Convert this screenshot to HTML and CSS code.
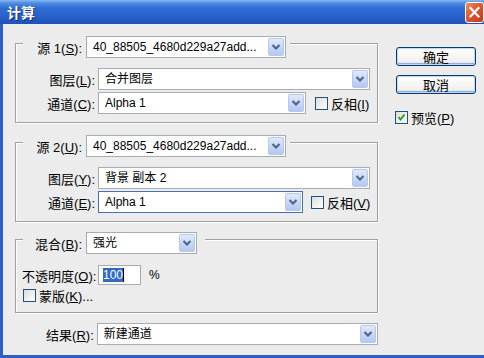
FILE: index.html
```html
<!DOCTYPE html>
<html lang="zh-CN">
<head>
    <meta charset="UTF-8">
    <title>计算</title>
    <link rel="stylesheet" href="styles.css">
</head>
<body>
    <div class="window">
        <div class="titlebar">
            <span class="title">计算</span>
            <span class="close">
                <svg width="19" height="21" viewBox="0 0 19 21">
                    <path d="M5.5 6 L13.5 14.5 M13.5 6 L5.5 14.5" stroke="#fff" stroke-width="2.2" stroke-linecap="square"/>
                </svg>
            </span>
        </div>

        <div class="client">
            <div class="main">
                <!-- source 1 -->
                <div class="group">
                    <div class="legend">
                        <label class="lbl">源 1(<u>S</u>):</label>
                        <div class="combo w-src"><span class="val">40_88505_4680d229a27add...</span><span class="arrow"><svg width="10" height="6" viewBox="0 0 10 6"><path d="M1.5 1 L5 4.5 L8.5 1" fill="none" stroke="#4d6185" stroke-width="2"/></svg></span></div>
                    </div>
                    <div class="row first">
                        <label class="lbl">图层(<u>L</u>):</label>
                        <div class="combo w-layer"><span class="val">合并图层</span><span class="arrow"><svg width="10" height="6" viewBox="0 0 10 6"><path d="M1.5 1 L5 4.5 L8.5 1" fill="none" stroke="#4d6185" stroke-width="2"/></svg></span></div>
                    </div>
                    <div class="row">
                        <label class="lbl">通道(<u>C</u>):</label>
                        <div class="combo w-ch1"><span class="val">Alpha 1</span><span class="arrow"><svg width="10" height="6" viewBox="0 0 10 6"><path d="M1.5 1 L5 4.5 L8.5 1" fill="none" stroke="#4d6185" stroke-width="2"/></svg></span></div>
                        <span class="chk inv1"><span class="cb"></span><span>反相(<u>I</u>)</span></span>
                    </div>
                </div>

                <!-- source 2 -->
                <div class="group g2">
                    <div class="legend">
                        <label class="lbl">源 2(<u>U</u>):</label>
                        <div class="combo w-src"><span class="val">40_88505_4680d229a27add...</span><span class="arrow"><svg width="10" height="6" viewBox="0 0 10 6"><path d="M1.5 1 L5 4.5 L8.5 1" fill="none" stroke="#4d6185" stroke-width="2"/></svg></span></div>
                    </div>
                    <div class="row first">
                        <label class="lbl">图层(<u>Y</u>):</label>
                        <div class="combo w-layer"><span class="val">背景 副本 2</span><span class="arrow"><svg width="10" height="6" viewBox="0 0 10 6"><path d="M1.5 1 L5 4.5 L8.5 1" fill="none" stroke="#4d6185" stroke-width="2"/></svg></span></div>
                    </div>
                    <div class="row">
                        <label class="lbl">通道(<u>E</u>):</label>
                        <div class="combo w-ch2 focus"><span class="val">Alpha 1</span><span class="arrow"><svg width="10" height="6" viewBox="0 0 10 6"><path d="M1.5 1 L5 4.5 L8.5 1" fill="none" stroke="#4d6185" stroke-width="2"/></svg></span></div>
                        <span class="chk inv2"><span class="cb"></span><span>反相(<u>V</u>)</span></span>
                    </div>
                </div>

                <!-- blending -->
                <div class="group g3">
                    <div class="legend wide">
                        <label class="lbl">混合(<u>B</u>):</label>
                        <div class="combo w-blend"><span class="val">强光</span><span class="arrow"><svg width="10" height="6" viewBox="0 0 10 6"><path d="M1.5 1 L5 4.5 L8.5 1" fill="none" stroke="#4d6185" stroke-width="2"/></svg></span></div>
                    </div>
                    <div class="opacity">
                        <label class="olbl">不透明度(<u>O</u>):</label>
                        <div class="input"><span class="sel">100</span><span class="caret"></span></div>
                        <span class="pct">%</span>
                    </div>
                    <div class="mask">
                        <span class="chk"><span class="cb"></span><span>蒙版(<u>K</u>)...</span></span>
                    </div>
                </div>

                <div class="row result">
                    <label class="lbl">结果(<u>R</u>):</label>
                    <div class="combo w-result"><span class="val">新建通道</span><span class="arrow"><svg width="10" height="6" viewBox="0 0 10 6"><path d="M1.5 1 L5 4.5 L8.5 1" fill="none" stroke="#4d6185" stroke-width="2"/></svg></span></div>
                </div>
            </div>

            <div class="side">
                <div class="btn">确定</div>
                <div class="btn">取消</div>
                <span class="chk preview">
                    <span class="cb"><svg width="11" height="11" viewBox="0 0 11 11"><path d="M2.5 5 L4.5 7.5 L8.5 2.5" fill="none" stroke="#21a121" stroke-width="2"/></svg></span><span>预览(<u>P</u>)</span>
                </span>
            </div>
        </div>
    </div>
</body>
</html>
```

FILE: styles.css
```css
body {
    margin: 0;
    background-color: #ececec;
    overflow: hidden;
    font-family: "Liberation Sans", "Noto Sans CJK SC", sans-serif;
    font-size: 13px;
    color: #000;
}
u {
    text-decoration: underline;
    text-underline-offset: 1px;
}
.window {
    width: 485px;
    height: 358px;
    display: flex;
    flex-direction: column;
}
.titlebar {
    height: 24px;
    flex: none;
    display: flex;
    align-items: center;
    justify-content: space-between;
    padding: 0 1px 0 7px;
    background: linear-gradient(#8ab8f0 0, #4f8ee2 3px, #2f6dd5 8px, #2862cc 16px, #1e50b6 24px);
}
.title {
    font-family: "Noto Sans CJK SC", sans-serif;
    font-size: 14px;
    font-weight: bold;
    color: #fff;
    text-shadow: 1px 1px 0 #0c2b7a;
}
.close {
    width: 19px;
    height: 21px;
    margin-top: 1px;
    box-sizing: border-box;
    border: 1px solid #fff;
    border-radius: 3px;
    background: linear-gradient(135deg, #f08a5c, #d9502a 55%, #c23e1c);
    display: flex;
}
.close svg {
    margin: -1px;
}
.client {
    flex: 1;
    display: flex;
    gap: 18px;
    padding: 19px 0 0 12px;
    border-left: 3px solid #2b5fca;
    border-bottom: 3px solid #2b5fca;
}
.main {
    width: 363px;
    display: flex;
    flex-direction: column;
}
.group {
    border: 1px solid #a0a0a0;
    box-shadow: inset 1px 1px 0 #fff, 1px 1px 0 #fff;
    padding-bottom: 8px;
}
.g2 { margin-top: 19px; }
.g3 { margin-top: 17px; padding-bottom: 10px; }
.legend {
    display: flex;
    align-items: center;
    gap: 4px;
    width: max-content;
    margin: -8px 0 0 7px;
    padding: 0 4px;
    background-color: #ececec;
}
.legend.wide { padding-right: 8px; }
.legend .lbl {
    width: 55px;
    text-align: right;
}
.row {
    display: flex;
    align-items: center;
    height: 22px;
}
.row .lbl {
    width: 79px;
    margin-right: 3px;
    text-align: right;
}
.row.first { margin-top: 10px; }
.row + .row { margin-top: 2px; }
.result { margin-top: 10px; }

.combo {
    display: flex;
    height: 22px;
    box-sizing: border-box;
    border: 1px solid #a5acb2;
    background-color: #fff;
    font-size: 12px;
}
.combo.focus { border-color: #4a6eb5; }
.combo .val {
    flex: 1;
    padding-left: 6px;
    line-height: 20px;
    white-space: nowrap;
    overflow: hidden;
}
.combo .arrow {
    width: 16px;
    margin: 1px;
    box-sizing: border-box;
    border: 1px solid #b7c8ee;
    border-radius: 2px;
    background: linear-gradient(#e1eafc, #c3d4f7 60%, #b4c8f1);
    display: flex;
    align-items: center;
    justify-content: center;
}
.w-src { width: 200px; }
.w-layer { width: 272px; }
.w-ch1 { width: 208px; }
.w-ch2 { width: 205px; }
.w-blend { width: 111px; }
.w-result { width: 282px; }

.chk {
    display: flex;
    align-items: center;
    gap: 3px;
}
.cb {
    width: 13px;
    height: 13px;
    flex: none;
    box-sizing: border-box;
    border: 1px solid #1c5180;
    background: linear-gradient(135deg, #dcdcd7, #fff);
    display: flex;
    align-items: center;
    justify-content: center;
}
.inv1 { margin-left: 9px; }
.inv2 { margin-left: 8px; }

.opacity {
    display: flex;
    align-items: center;
    height: 20px;
    margin-top: 11px;
    padding-left: 6px;
}
.olbl { width: 76px; }
.input {
    width: 43px;
    height: 20px;
    box-sizing: border-box;
    border: 1px solid #a5acb2;
    background-color: #fff;
    padding-left: 4px;
    display: flex;
    align-items: center;
    font-size: 12px;
}
.sel {
    background-color: #316ac5;
    color: #fff;
    line-height: 14px;
}
.caret {
    width: 1px;
    height: 14px;
    background-color: #000;
}
.pct {
    margin-left: 8px;
    font-size: 12px;
}
.mask {
    margin-top: 4px;
    padding-left: 7px;
    height: 13px;
    display: flex;
    align-items: center;
}

.side {
    margin-top: 4px;
    width: 80px;
    display: flex;
    flex-direction: column;
}
.btn {
    height: 19px;
    box-sizing: border-box;
    border: 1px solid #003c74;
    border-radius: 3px;
    background: linear-gradient(#ffffff, #f1f0ec 80%, #d9d4ca);
    box-shadow: inset 0 0 0 1px #c4d6f5, inset 0 -2px 0 0 #8facea;
    display: flex;
    align-items: center;
    justify-content: center;
}
.btn + .btn { margin-top: 9px; }
.preview {
    margin-top: 14px;
    margin-left: -1px;
}
```
